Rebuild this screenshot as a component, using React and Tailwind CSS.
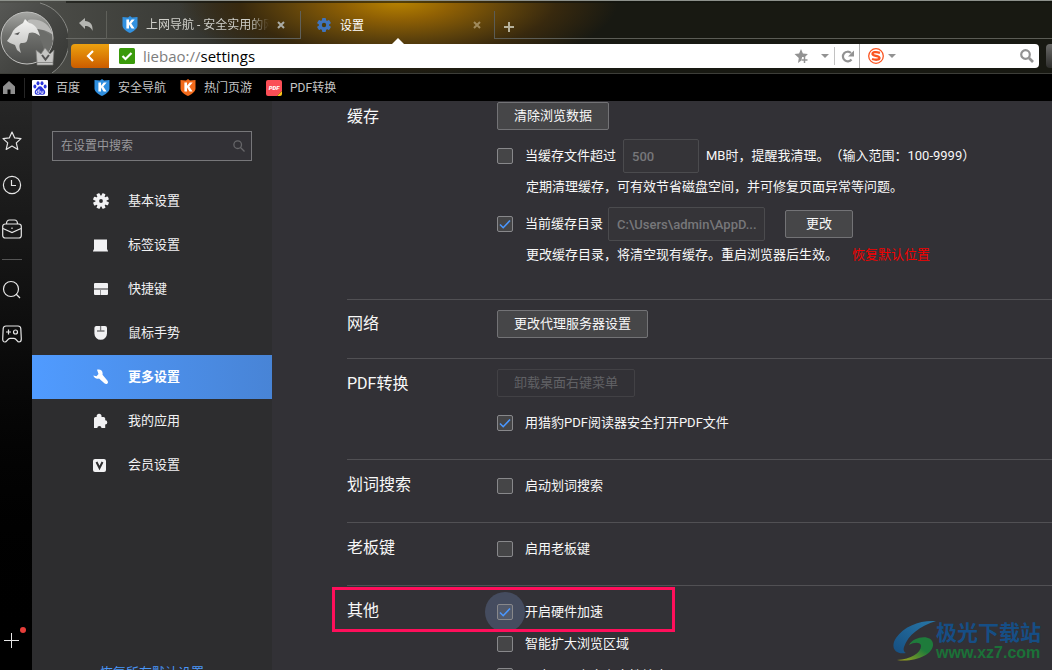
import { useState } from 'react'
import clsx from 'clsx'

const bookmarks = [
  { label: '百度', icon: <BaiduIcon /> },
  { label: '安全导航', icon: <ShieldIcon color="#2f8fe0" /> },
  { label: '热门页游', icon: <ShieldIcon color="#f26a1b" /> },
  { label: 'PDF转换', icon: <PdfIcon /> },
]

const navItems = [
  { id: 'basic', label: '基本设置', icon: <GearIcon /> },
  { id: 'tabs', label: '标签设置', icon: <LaptopIcon /> },
  { id: 'keys', label: '快捷键', icon: <PanelsIcon /> },
  { id: 'mouse', label: '鼠标手势', icon: <MouseIcon /> },
  { id: 'more', label: '更多设置', icon: <WrenchIcon /> },
  { id: 'apps', label: '我的应用', icon: <PuzzleIcon /> },
  { id: 'vip', label: '会员设置', icon: <VipIcon /> },
]

/* ---------- icons ---------- */

function ShieldIcon({ color }) {
  return (
    <svg width="16" height="17" viewBox="0 0 16 17">
      <path d="M8 0 10 1.600 15.500 1v8.500C15.500 13 11 15.600 8 17 5 15.600.5 13 .5 9.500V1L6 1.600z" fill={color} />
      <path d="M4.400 3.500H7v3.300L9.700 3.500h3L9.300 7.600l3.300 5H9.600L7 8.600v4H4.400z" fill="#fff" />
    </svg>
  )
}

function BaiduIcon() {
  return (
    <svg width="16" height="16" viewBox="0 0 16 16">
      <rect width="16" height="16" rx="1" fill="#fff" />
      <g fill="#2b35dc">
        <ellipse cx="6" cy="3.200" rx="1.500" ry="2" />
        <ellipse cx="10" cy="3.200" rx="1.500" ry="2" />
        <ellipse cx="2.900" cy="6.500" rx="1.500" ry="1.900" />
        <ellipse cx="13.100" cy="6.500" rx="1.500" ry="1.900" />
        <path d="M8 6.300c2 0 2.600 2 4 3.300 1.900 1.700 1.600 5.200-1 5.200-1.200 0-2-.3-3-.3s-1.800.3-3 .3c-2.600 0-2.900-3.500-1-5.200 1.400-1.300 2-3.300 4-3.300z" />
      </g>
      <path d="M7 9v4.300H5.500a1.200 1.200 0 1 1 0-2.400H7M8.800 10.800v1.500c0 .7.300 1 1 1h1.200v-2.500" fill="none" stroke="#fff" strokeWidth=".9" />
    </svg>
  )
}

function PdfIcon() {
  return (
    <svg width="16" height="16" viewBox="0 0 16 16">
      <path d="M2 0h12a2 2 0 0 1 2 2v9l-5 5H2a2 2 0 0 1-2-2V2a2 2 0 0 1 2-2z" fill="#fb4e56" />
      <path d="M16 11v3a2 2 0 0 1-2 2h-3z" fill="#fcc419" />
      <text x="8" y="10" textAnchor="middle" fontFamily="Roboto" fontSize="6" fontWeight="900" fontStyle="italic" fill="#fff">PDF</text>
    </svg>
  )
}

function GearIcon() {
  return (
    <svg width="16" height="16" viewBox="0 0 16 16">
      <g fill="currentColor">
        {[0, 45, 90, 135].map((a) => (
          <rect key={a} x="6.300" y="0" width="3.400" height="16" rx=".8" transform={`rotate(${a + 22} 8 8)`} />
        ))}
        <circle cx="8" cy="8" r="5.500" />
      </g>
      <circle cx="8" cy="8" r="1.900" fill="#2d2d2f" />
    </svg>
  )
}

function LaptopIcon() {
  return (
    <svg width="16" height="16" viewBox="0 0 16 16" fill="currentColor">
      <path d="M1 2.500h13v9.500l1 2v.5H0V14l1-2z" />
    </svg>
  )
}

function PanelsIcon() {
  return (
    <svg width="16" height="16" viewBox="0 0 16 16" fill="currentColor">
      <path d="M2 2h12a1 1 0 0 1 1 1v4H1V3a1 1 0 0 1 1-1zM1 9h6v5H2a1 1 0 0 1-1-1zM8 9h7v4a1 1 0 0 1-1 1H8z" />
      <path d="M1 7h14v2H8v5H7V9H1z" opacity=".5" />
    </svg>
  )
}

function MouseIcon() {
  return (
    <svg width="16" height="16" viewBox="0 0 16 16">
      <path d="M3 1h9a2 2 0 0 1 2 2v5.500a6.300 6.300 0 0 1-12.600 0V3A2 2 0 0 1 3 1z" fill="currentColor" />
      <path d="M7.600 1v4.500M4 6h7.500" stroke="#77777a" strokeWidth="1.300" />
    </svg>
  )
}

function WrenchIcon() {
  return (
    <svg width="16" height="16" viewBox="0 0 16 16">
      <path d="M4 .8C7.500-.2 10.300 2 9.500 5.800l5 6c1.500 2-.8 4.300-2.800 2.800L6 9.500C3.500 10.300 1 9 .3 6.500l3.200.7L5.500 5z" fill="currentColor" />
    </svg>
  )
}

function PuzzleIcon() {
  return (
    <svg width="16" height="16" viewBox="0 0 16 16">
      <path d="M1 5.500q0-1.500 1.500-1.500h1.200a2.500 2.500 0 1 1 4.800 0h2q1.700 0 1.700 1.500v1.800a2.100 2.100 0 1 1 0 4.200V15H8.500a2.100 2.100 0 0 0-4.200 0H1z" fill="currentColor" />
    </svg>
  )
}

function VipIcon() {
  return (
    <svg width="16" height="16" viewBox="0 0 16 16">
      <rect x="0" y="2" width="13" height="13" rx="2" fill="currentColor" />
      <path d="m3.500 5 3 6 3-6" fill="none" stroke="#2d2d2f" strokeWidth="2" />
    </svg>
  )
}

function BrowserLogo() {
  return (
    <svg className="w-full h-full" viewBox="0 1 68 72">
      <defs>
        <linearGradient id="disc" x1="0" y1="0" x2="0" y2="1">
          <stop offset="0" stopColor="#a5a6a3" />
          <stop offset=".45" stopColor="#6f706d" />
          <stop offset="1" stopColor="#4b4c4a" />
        </linearGradient>
        <linearGradient id="face" x1="0" y1="0" x2="0" y2="1">
          <stop offset="0" stopColor="#f4f4f3" />
          <stop offset="1" stopColor="#bdbdbb" />
        </linearGradient>
        <linearGradient id="ring" x1="0" y1="0" x2="1" y2="1">
          <stop offset="0" stopColor="#575855" />
          <stop offset="1" stopColor="#343532" />
        </linearGradient>
      </defs>
      <path d="M0 3h40A39 39 0 0 1 52 73H0z" fill="url(#ring)" />
      <path d="M40 3A39 39 0 0 1 52 73" fill="none" stroke="#868783" />
      <circle cx="27" cy="38" r="27" fill="#424340" />
      <circle cx="27" cy="38" r="26" fill="url(#disc)" stroke="#c4c4c2" />
      <path d="M31 28c11 0 19 5 22 13-1 7-5 12-10 16 2-9 0-18-12-26z" fill="#6c6d6a" />
      <path d="M28 20c12-2 22 4 25 15-6-5-14-7-25-6z" fill="#b9b9b7" />
      <path d="M7 41c2-3 4-5 6-10 3-4 7-6 10-8l2-4 4 4c6 1 9 6 11 13-5-4-8-4-11-3-2 5 0 11-8 10-3 2-1 6 0 10l-4-3-2-5-5-2z" fill="url(#face)" />
      <path d="M14 34l6-2-2 3z" fill="#555" />
      <path d="m36 50 5 4 4-6 5 6 4-4-1 12v3H37v-3z" fill="#c6c6c4" stroke="#7f7f7d" strokeWidth=".7" />
      <path d="m42 55 3.500 4.500L49 55" fill="none" stroke="#555" strokeWidth="2" />
      <path d="M37 62.500h16" stroke="#8b8b89" />
    </svg>
  )
}

/* ---------- browser frame ---------- */

function CloseMark() {
  return (
    <svg width="8" height="8" viewBox="0 0 8 8">
      <path d="m1 1 6 6M7 1 1 7" stroke="currentColor" strokeWidth="2" />
    </svg>
  )
}

function TabStrip() {
  return (
    <div className="flex h-[41px] pt-2 text-xs">
      <button aria-label="撤销" className="w-10 h-[28px] border-b border-[#686965] flex items-center justify-center">
        <svg width="14" height="14" viewBox="0 0 14 14">
          <path d="M0 5 6 0v3c5 .3 8 3 7.600 10C12 9.500 10 8 6 8v3z" fill="#b5b6b2" />
        </svg>
      </button>
      <div className="w-[195px] h-[28px] border-b border-l border-r border-[#5f605a] flex items-center pl-[15px] text-[#cfcfc9]">
        <ShieldIcon color="#3291e0" />
        <span className="ml-2 w-[123px] overflow-hidden whitespace-nowrap [mask-image:linear-gradient(to_right,black_85%,transparent)]">
          上网导航 - 安全实用的网址
        </span>
        <button aria-label="关闭标签" className="ml-2 text-[#aaaba5]"><CloseMark /></button>
      </div>
      <div className="w-[193px] h-[33px] relative flex items-start pt-[7px] pl-[16px] text-white">
        <span className="text-[#3f74bd]">
          <svg width="14" height="14" viewBox="0 0 14 14">
            <g fill="currentColor">
              {[0, 60, 120].map((a) => (
                <rect key={a} x="5" y="0" width="4" height="14" rx="1" transform={`rotate(${a} 7 7)`} />
              ))}
              <circle cx="7" cy="7" r="5.200" />
            </g>
            <circle cx="7" cy="7" r="2.200" fill="#4a3a0c" />
          </svg>
        </span>
        <span className="ml-[9px] leading-4">设置</span>
        <button aria-label="关闭标签" className="ml-auto mr-[13px] mt-[3px] text-[#a08a5c]"><CloseMark /></button>
        <span className="absolute left-[91px] bottom-0 border-x-6 border-b-6 border-x-transparent border-b-white" />
      </div>
      <div className="flex-1 h-[28px] border-b border-l border-[#5b5c55] flex items-center pl-[9px]">
        <button aria-label="新建标签" className="pt-1 text-[#b7b29c]">
          <svg width="10" height="10" viewBox="0 0 10 10">
            <path d="M5 0v10M0 5h10" stroke="currentColor" strokeWidth="2" />
          </svg>
        </button>
      </div>
    </div>
  )
}

function AddressRow() {
  return (
    <div className="flex h-6 pl-[3px]">
      <button aria-label="后退" className="w-[38px] rounded-l-sm bg-linear-to-b from-[#eca10f] to-[#cb5c00] flex items-center justify-center">
        <svg width="8" height="12" viewBox="0 0 8 12">
          <path d="M7 1 2 6l5 5" fill="none" stroke="#fff" strokeWidth="2.200" />
        </svg>
      </button>
      <div className="flex-1 min-w-0 bg-white flex items-center pl-[10px]">
        <svg width="16" height="16" viewBox="0 0 16 16">
          <rect width="16" height="16" rx="1.500" fill="#3a9a0b" />
          <path d="m3.500 8 3 3 6-6" fill="none" stroke="#fff" strokeWidth="2.200" />
        </svg>
        <span className="ml-2 font-['Open_Sans',sans-serif] text-[15px] leading-5 text-black">
          <span className="text-[#7d7d7d]">liebao://</span>settings
        </span>
        <div className="ml-auto flex items-center text-[#929292]">
          <button aria-label="收藏">
            <svg width="14" height="14" viewBox="0 0 14 14" fill="currentColor">
              <path d="m7 0 1.900 4.500 5 .4L11 8H8v3l-4 3 .8-5L.5 5l4.600-.5z" />
              <path d="M10.500 8v6M7.500 11h6" stroke="#fff" strokeWidth="3" />
              <path d="M10.500 8v6M7.500 11h6" stroke="currentColor" strokeWidth="1.500" />
            </svg>
          </button>
          <span className="ml-[13px] border-x-4 border-t-4 border-x-transparent border-t-[#929292]" />
          <span className="ml-[5px] w-px h-[18px] bg-[#c2c2c2]" />
          <button aria-label="刷新" className="ml-[6px] mr-[5px]">
            <svg width="13" height="13" viewBox="0 0 13 13">
              <path d="M10 3a4.800 4.800 0 1 0 .5 6.500" fill="none" stroke="currentColor" strokeWidth="2.200" />
              <path d="M13 .5V6.500H7z" fill="currentColor" />
            </svg>
          </button>
        </div>
      </div>
      <div className="w-[180px] border-l border-[#b0b0b0] bg-white rounded-r-sm flex items-center pl-2 pr-[5px]">
        <svg width="16" height="16" viewBox="0 0 16 16" fill="none" stroke="#fb5420">
          <circle cx="8" cy="8" r="7.300" strokeWidth="1.300" />
          <path d="M12 4.800C8 3.500 4.500 4 4.500 6c0 2.200 7 1.500 7 4 0 2-4 2.200-7.500 1" strokeWidth="2.300" />
        </svg>
        <span className="ml-1 border-x-4 border-t-4 border-x-transparent border-t-[#929292]" />
        <input aria-label="搜索" className="flex-1 min-w-0 h-full px-2 text-xs text-black outline-none" />
        <button aria-label="搜索" className="text-[#929292]">
          <svg width="14" height="14" viewBox="0 0 14 14">
            <circle cx="5.500" cy="5.500" r="4.300" fill="none" stroke="currentColor" strokeWidth="2.200" />
            <path d="m9 9 4 4" stroke="currentColor" strokeWidth="2.600" />
          </svg>
        </button>
      </div>
      <div className="ml-[7px] w-[6px] rounded-l-sm bg-linear-to-b from-[#6a6a68] to-[#2e2e2c]" />
    </div>
  )
}

function Bookmarks() {
  return (
    <div className="h-[27px] shrink-0 bg-black flex items-center text-xs text-[#c4c4c4]">
      <button aria-label="主页" className="ml-[3px]">
        <svg width="12" height="13" viewBox="0 0 12 13">
          <path d="M6 0 12 5.500V13H7.500V8.500h-3V13H0V5.500z" fill="#8f8f8f" />
        </svg>
      </button>
      <span className="ml-[9px] mr-[7px] w-px h-5 bg-[#262626]" />
      <div className="flex gap-[14px]">
        {bookmarks.map((b) => (
          <a key={b.label} href="#" className="flex items-center gap-2">
            {b.icon}
            {b.label}
          </a>
        ))}
      </div>
    </div>
  )
}

function ToolRail() {
  const btn = 'h-11 flex items-center'
  return (
    <div className="w-8 shrink-0 bg-linear-to-b from-[#262626] to-black flex flex-col pt-[18px] pl-[2px] text-[#e6e6e6]">
      <button aria-label="收藏夹" className={btn}>
        <svg width="20" height="20" viewBox="0 0 20 20" fill="none" stroke="currentColor" strokeWidth="1.200" strokeLinejoin="round">
          <path d="m10 1 2.700 5.900 6.300.7-4.700 4.300 1.500 6.500L10 15.100l-5.800 3.300 1.500-6.500L1 7.600l6.300-.7z" />
        </svg>
      </button>
      <button aria-label="历史" className={btn}>
        <svg width="20" height="20" viewBox="0 0 20 20" fill="none" stroke="currentColor" strokeWidth="1.200">
          <circle cx="10" cy="10" r="8.600" />
          <path d="M9.500 5v5.500H14" />
        </svg>
      </button>
      <button aria-label="工具箱" className={btn}>
        <svg width="20" height="20" viewBox="0 0 20 20" fill="none" stroke="currentColor" strokeWidth="1.200">
          <rect x=".7" y="5" width="18.600" height="14" rx="2.500" />
          <path d="M4.500 5q0-4 3-4h5q3 0 3 4M1 9.500l9 4 9-4M10 8.500v1.500" />
        </svg>
      </button>
      <span className="mt-2 mb-2 w-5 h-px shrink-0 bg-[#555]" />
      <button aria-label="搜索" className={btn}>
        <svg width="20" height="20" viewBox="0 0 20 20" fill="none" stroke="currentColor" strokeWidth="1.200">
          <circle cx="9" cy="9" r="7.500" />
          <path d="m14 14 4 4" />
        </svg>
      </button>
      <button aria-label="游戏" className={btn}>
        <svg width="20" height="20" viewBox="0 0 20 20" fill="none" stroke="currentColor" strokeWidth="1.200">
          <path d="M4 2h12q2.500 0 2.800 2.500L19.300 15q0 3-2.300 3c-2 0-2.500-3.700-5-3.700H8c-2.500 0-3 3.700-5 3.700q-2.300 0-2.300-3L1.200 4.500Q1.500 2 4 2zM6.500 5.500v5M4 8h5" />
          <circle cx="13.500" cy="8" r="2" />
        </svg>
      </button>
      <button aria-label="添加" className="mt-auto mb-2 h-11 relative flex items-center">
        <svg width="20" height="20" viewBox="0 0 20 20" stroke="currentColor">
          <path d="M9.500 3v15M2 10.500h15" />
        </svg>
        <span className="absolute left-[18px] top-[9px] size-[6px] rounded-full bg-[#e53d39]" />
      </button>
    </div>
  )
}

/* ---------- settings ---------- */

function SideNav() {
  const [active, setActive] = useState('more')
  return (
    <nav className="w-60 shrink-0 bg-[#2d2d2f] flex flex-col pt-[30px] text-[13px] text-[#f1f1f3] overflow-hidden">
      <label className="mx-5 h-[30px] shrink-0 border border-[#77777a] bg-[#323136] flex items-center pl-2 pr-[6px]">
        <input
          aria-label="在设置中搜索"
          placeholder="在设置中搜索"
          className="flex-1 min-w-0 text-xs outline-none placeholder:text-[#98989b]"
        />
        <svg width="12" height="12" viewBox="0 0 12 12" fill="none" stroke="#666669" strokeWidth="1.300">
          <circle cx="4.700" cy="4.700" r="3.800" />
          <path d="m7.500 7.500 4 4" />
        </svg>
      </label>
      <div className="mt-[18px] shrink-0 flex flex-col">
        {navItems.map((item) => (
          <button
            key={item.id}
            onClick={() => setActive(item.id)}
            className={clsx(
              'h-11 pl-[61px] flex items-center gap-[19px]',
              active === item.id && 'bg-linear-to-r from-[#509bff] to-[#4884d6] font-bold text-white'
            )}
          >
            {item.icon}
            {item.label}
          </button>
        ))}
      </div>
      <a href="#" className="mt-44 ml-[68px] shrink-0 leading-5 text-[#4a97f8]">恢复所有默认设置</a>
    </nav>
  )
}

function Section({ title, children, className, titleClass = 'h-[30px]' }) {
  return (
    <section className={clsx('flex items-start border-t', className)}>
      <h2 className={clsx('w-[150px] shrink-0 flex items-center text-base', titleClass)}>{title}</h2>
      <div className="flex-1 min-w-0">{children}</div>
    </section>
  )
}

function Check({ label, defaultChecked, halo }) {
  return (
    <label className="h-8 flex items-center gap-3 whitespace-nowrap">
      <span className="relative grid size-4">
        {halo && <span className="absolute -inset-3 rounded-full bg-[#454c5f]" />}
        <input
          type="checkbox"
          defaultChecked={defaultChecked}
          className={clsx(
            'peer relative appearance-none size-4 rounded-xs border border-[#88888b]',
            halo ? 'bg-[#535a6b]' : 'bg-[#454547]'
          )}
        />
        <svg className="absolute inset-0 hidden peer-checked:block pointer-events-none" width="16" height="16" viewBox="0 0 16 16">
          <path d="m3 8.500 3.200 3.200L13 4.500" fill="none" stroke="#4a97ff" strokeWidth="1.600" />
        </svg>
      </span>
      {label}
    </label>
  )
}

function Button({ children, className, disabled }) {
  return (
    <button
      disabled={disabled}
      className={clsx(
        'block h-7 border rounded-xs whitespace-nowrap',
        disabled ? 'border-[#424145] text-[#616165]' : 'border-[#737376] bg-[#464648] hover:bg-[#505052]',
        className
      )}
    >
      {children}
    </button>
  )
}

const field = 'h-[34px] border border-[#4b4b4e] rounded-xs bg-[#353438] px-2 font-medium text-[#77777a]'

function SettingsContent() {
  return (
    <main className="flex-1 min-w-0 overflow-hidden bg-[#323136] pl-[75px] text-[13px] text-[#f8f8f8] [text-spacing-trim:space-all]">
      <Section title="缓存" className="border-transparent pb-[30px]">
        <Button className="px-4">清除浏览数据</Button>
        <div className="mt-[9px] h-[34px] flex items-center gap-[7px] whitespace-nowrap">
          <Check label="当缓存文件超过" />
          <input aria-label="缓存大小" defaultValue="500" className={clsx(field, 'w-[76px]')} disabled />
          <span>MB时，提醒我清理。（输入范围：100-9999）</span>
        </div>
        <p className="h-7 pl-[29px] flex items-center whitespace-nowrap">定期清理缓存，可有效节省磁盘空间，并可修复页面异常等问题。</p>
        <div className="mt-[6px] h-[34px] flex items-center">
          <Check label="当前缓存目录" defaultChecked />
          <input aria-label="缓存目录" defaultValue="C:\Users\admin\AppD..." className={clsx(field, 'ml-[5px] w-[157px]')} disabled />
          <Button className="ml-5 px-5">更改</Button>
        </div>
        <p className="h-7 pl-[29px] flex items-center gap-[14px] whitespace-nowrap">
          更改缓存目录，将清空现有缓存。重启浏览器后生效。
          <a href="#" className="text-[#f50000]">恢复默认位置</a>
        </p>
      </Section>

      <Section title="网络" titleClass="h-7" className="border-[#515054] pt-[10px] pb-5">
        <Button className="px-4">更改代理服务器设置</Button>
      </Section>

      <Section title="PDF转换" className="border-[#515054] pt-[10px] pb-5">
        <Button className="px-4" disabled>卸载桌面右键菜单</Button>
        <div className="mt-[10px]">
          <Check label="用猎豹PDF阅读器安全打开PDF文件" defaultChecked />
        </div>
      </Section>

      <Section title="划词搜索" className="border-[#515054] pt-[10px] pb-5">
        <Check label="启动划词搜索" />
      </Section>

      <Section title="老板键" className="border-[#515054] pt-[10px] pb-5">
        <Check label="启用老板键" />
      </Section>

      <div className="relative">
        <Section title="其他" className="border-[#515054] pt-[10px] pb-5">
          <Check label="开启硬件加速" defaultChecked halo />
          <Check label="智能扩大浏览区域" />
          <Check label="开启页面中含安全性检查" />
        </Section>
        <div className="absolute -left-[15px] top-[2px] w-[343px] h-[45px] border-3 border-[#ff0f5b] pointer-events-none" />
      </div>
    </main>
  )
}

function Watermark() {
  return (
    <div className="absolute right-[11px] bottom-[8px] flex items-center pointer-events-none">
      <svg width="44" height="42" viewBox="0 0 44 42">
        <defs>
          <linearGradient id="swirl" x1="0" y1="1" x2="1" y2="0">
            <stop offset="0" stopColor="#164e80" />
            <stop offset="1" stopColor="#2877a8" />
          </linearGradient>
          <linearGradient id="leaf" x1="0" y1="1" x2="1" y2="0">
            <stop offset="0" stopColor="#a8a51b" />
            <stop offset=".6" stopColor="#1e7b3b" />
          </linearGradient>
        </defs>
        <path d="M44 1C28 6 16 15 12 27c-1 3 0 5 2 6C3 35-2 27 4 18 12 6 28 0 44 1z" fill="url(#swirl)" />
        <path d="M5 40c14-1 24-7 24-14 0-4-7-4-12-1 5-9 23-11 24-1 1 10-18 19-36 16z" fill="url(#leaf)" />
      </svg>
      <div className="flex flex-col">
        <span className="text-[21px] leading-6 font-bold text-[#164e85]">极光下载站</span>
        <span className="text-[16px] leading-4 font-['Liberation_Sans',sans-serif] font-bold text-[#1b7138]">www.xz7.com</span>
      </div>
    </div>
  )
}

export default function App() {
  return (
    <div className="relative h-screen flex flex-col overflow-hidden bg-black font-[Roboto,'Noto_Sans_CJK_SC',sans-serif]">
      <header className="h-[74px] shrink-0 flex border-t border-b border-t-[#8d918b] border-b-[#3d3e39] bg-[radial-gradient(ellipse_220px_75px_at_398px_0px,#b98400_0%,#8f6004_25%,#5f430b_50%,#38290e_72%,transparent_100%),linear-gradient(to_right,#50514d_0px,#3a3b36_180px,#181912_330px)]">
        <div className="w-[68px] shrink-0 -mr-[2px]">
          <BrowserLogo />
        </div>
        <div className="flex-1 min-w-0 border-t-2 border-[#11120d]/60">
          <TabStrip />
          <div className="pl-[2px]">
            <AddressRow />
          </div>
        </div>
      </header>
      <Bookmarks />
      <div className="flex-1 min-h-0 flex">
        <ToolRail />
        <SideNav />
        <SettingsContent />
      </div>
      <Watermark />
    </div>
  )
}
